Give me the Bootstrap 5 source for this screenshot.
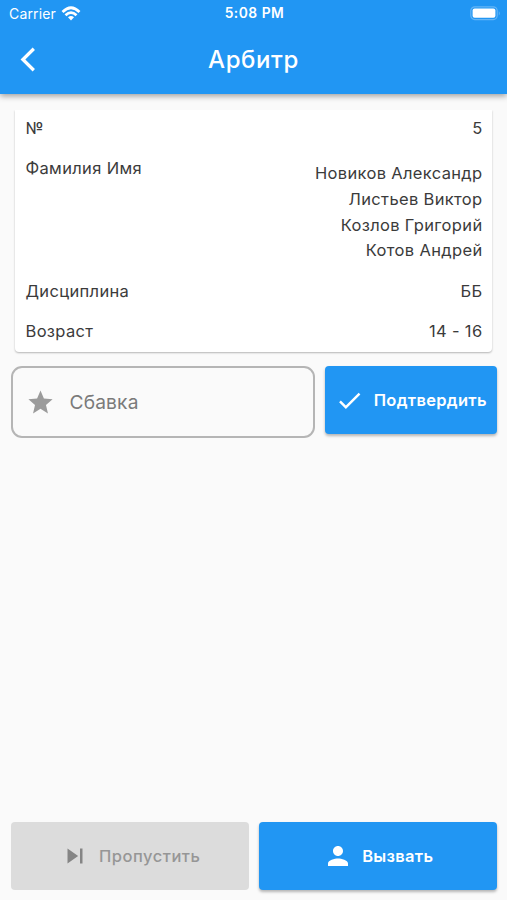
<!DOCTYPE html>
<html lang="ru">
<head>
<meta charset="utf-8">
<meta name="viewport" content="width=device-width, initial-scale=1">
<title>Арбитр</title>
<link href="https://cdn.jsdelivr.net/npm/bootstrap@5.3.0/dist/css/bootstrap.min.css" rel="stylesheet">
<style>
body{font-family:Inter,"Liberation Sans",sans-serif;background:#fafafa;color:#3b3b3b;height:900px;overflow:hidden}
svg{display:block;flex:none}
.app-head{background:#2196f3;color:#fff;height:94px;box-shadow:0 2px 6px rgba(0,0,0,.38);z-index:2}
.status{height:27px;padding:0 6px 0 9px;font-size:14px}
.status>*,.title-bar>*{flex:1 1 0}
.carrier{letter-spacing:.15px}
.clock{font-weight:600;font-size:13.8px;letter-spacing:.5px;padding-right:1px}
.title-bar{height:66px}
.title-bar h1{font-size:24px;font-weight:500;letter-spacing:.6px}
.info{margin:16px 15px 0;padding:6px 9.5px 6px 10.5px;height:242px;background:#fff;border-radius:0 0 4px 4px;box-shadow:0 1px 2px rgba(0,0,0,.28);font-size:16.5px;letter-spacing:.34px;clip-path:inset(0 -4px -4px -4px)}
.info dt,.info dd{font-weight:400;line-height:25.7px;margin:0}
.line{padding-bottom:14.6px}
.names{padding-top:5px}
.actions{padding:14px 10px 0 11px;gap:10px}
.field{height:72px;width:304px;border:2px solid #b5b5b5;border-radius:11px;color:#7a7a7a;font-size:19.2px;letter-spacing:.15px;padding-left:12.5px;gap:15px}
.tile{height:68px;border:0;border-radius:4px;font-size:16.5px;font-weight:600;letter-spacing:.3px;padding:0}
.tile-blue,.tile-blue:hover{background:#2196f3;color:#fff;box-shadow:0 2px 3px rgba(0,0,0,.28)}
.tile.tile-off:disabled{background:#dcdcdc;color:#969696;opacity:1;font-weight:500;letter-spacing:.5px}
.bottom{padding:0 10px 10px 11px;gap:10px}
.btn-gap{gap:9.5px}
</style>
<script src="https://cdn.jsdelivr.net/npm/bootstrap@5.3.0/dist/js/bootstrap.bundle.min.js"></script>
</head>
<body class="d-flex flex-column">
<header class="app-head position-relative flex-shrink-0">
  <div class="status d-flex align-items-center">
    <div class="d-flex align-items-center"><span class="carrier">Carrier</span>
      <svg class="ms-1" width="22" height="18" viewBox="0 0 22 18" fill="none" stroke="#fff" stroke-width="2.700"><path d="M2.500 7Q11-1.400 19.500 7M5.500 10.300Q11 5 16.500 10.300"/><path d="M11 15.400L8 12.300Q11 9.700 14 12.300Z" fill="#fff" stroke="none"/></svg>
    </div>
    <div class="clock text-center text-nowrap">5:08 PM</div>
    <div class="d-flex justify-content-end">
      <svg width="31" height="15" viewBox="0 0 31 15"><rect x=".8" y=".8" width="26.400" height="12.800" rx="4" fill="none" stroke="#64b5f6" stroke-width="1.200"/><rect x="2.600" y="2.600" width="22.800" height="9.200" rx="2" fill="#fff"/><path d="M28.800 5q2 2.300 0 4.600z" fill="#64b5f6"/></svg>
    </div>
  </div>
  <div class="title-bar d-flex align-items-center">
    <div><svg width="48" height="28" viewBox="0 0 48 28" fill="none" stroke="#fff" stroke-width="3.300"><path d="M33.800 2.800L22.900 13.500L33.800 24.200"/></svg></div>
    <h1 class="text-center m-0">Арбитр</h1>
    <div></div>
  </div>
</header>
<main class="d-flex flex-column flex-grow-1">
  <dl class="info mb-0">
    <div class="line d-flex justify-content-between"><dt>№</dt><dd>5</dd></div>
    <div class="line d-flex justify-content-between"><dt>Фамилия Имя</dt><dd class="names text-end">Новиков Александр<br>Листьев Виктор<br>Козлов Григорий<br>Котов Андрей</dd></div>
    <div class="line d-flex justify-content-between"><dt>Дисциплина</dt><dd>ББ</dd></div>
    <div class="d-flex justify-content-between"><dt>Возраст</dt><dd>14 - 16</dd></div>
  </dl>
  <div class="actions d-flex">
    <div class="field d-flex align-items-center flex-shrink-0">
      <svg width="29" height="29" viewBox="0 0 24 24" fill="#9b9b9b"><path d="M12 17.270L18.180 21l-1.640-7.030L22 9.240l-7.190-.61L12 2 9.190 8.630 2 9.240l5.460 4.730L5.820 21z"/></svg>
      <span>Сбавка</span>
    </div>
    <button class="tile tile-blue btn flex-fill d-flex align-items-center justify-content-center btn-gap text-nowrap" type="button">
      <svg width="29" height="29" viewBox="0 0 24 24" fill="#fff"><path d="M9 16.170L4.830 12l-1.420 1.410L9 19 21 7l-1.410-1.410z"/></svg>Подтвердить
    </button>
  </div>
  <div class="bottom d-flex mt-auto">
    <button class="tile tile-off btn w-50 d-flex align-items-center justify-content-center btn-gap" type="button" disabled>
      <svg width="30" height="30" viewBox="0 0 24 24" fill="#858585"><path d="M6 18l8.500-6L6 6v12zM16 6v12h2V6h-2z"/></svg>Пропустить
    </button>
    <button class="tile tile-blue btn w-50 d-flex align-items-center justify-content-center btn-gap" type="button">
      <svg width="30" height="30" viewBox="0 0 24 24" fill="#fff"><path d="M12 12c2.210 0 4-1.790 4-4s-1.790-4-4-4-4 1.790-4 4 1.790 4 4 4zm0 2c-2.670 0-8 1.340-8 4v2h16v-2c0-2.660-5.330-4-8-4z"/></svg>Вызвать
    </button>
  </div>
</main>
</body>
</html>
